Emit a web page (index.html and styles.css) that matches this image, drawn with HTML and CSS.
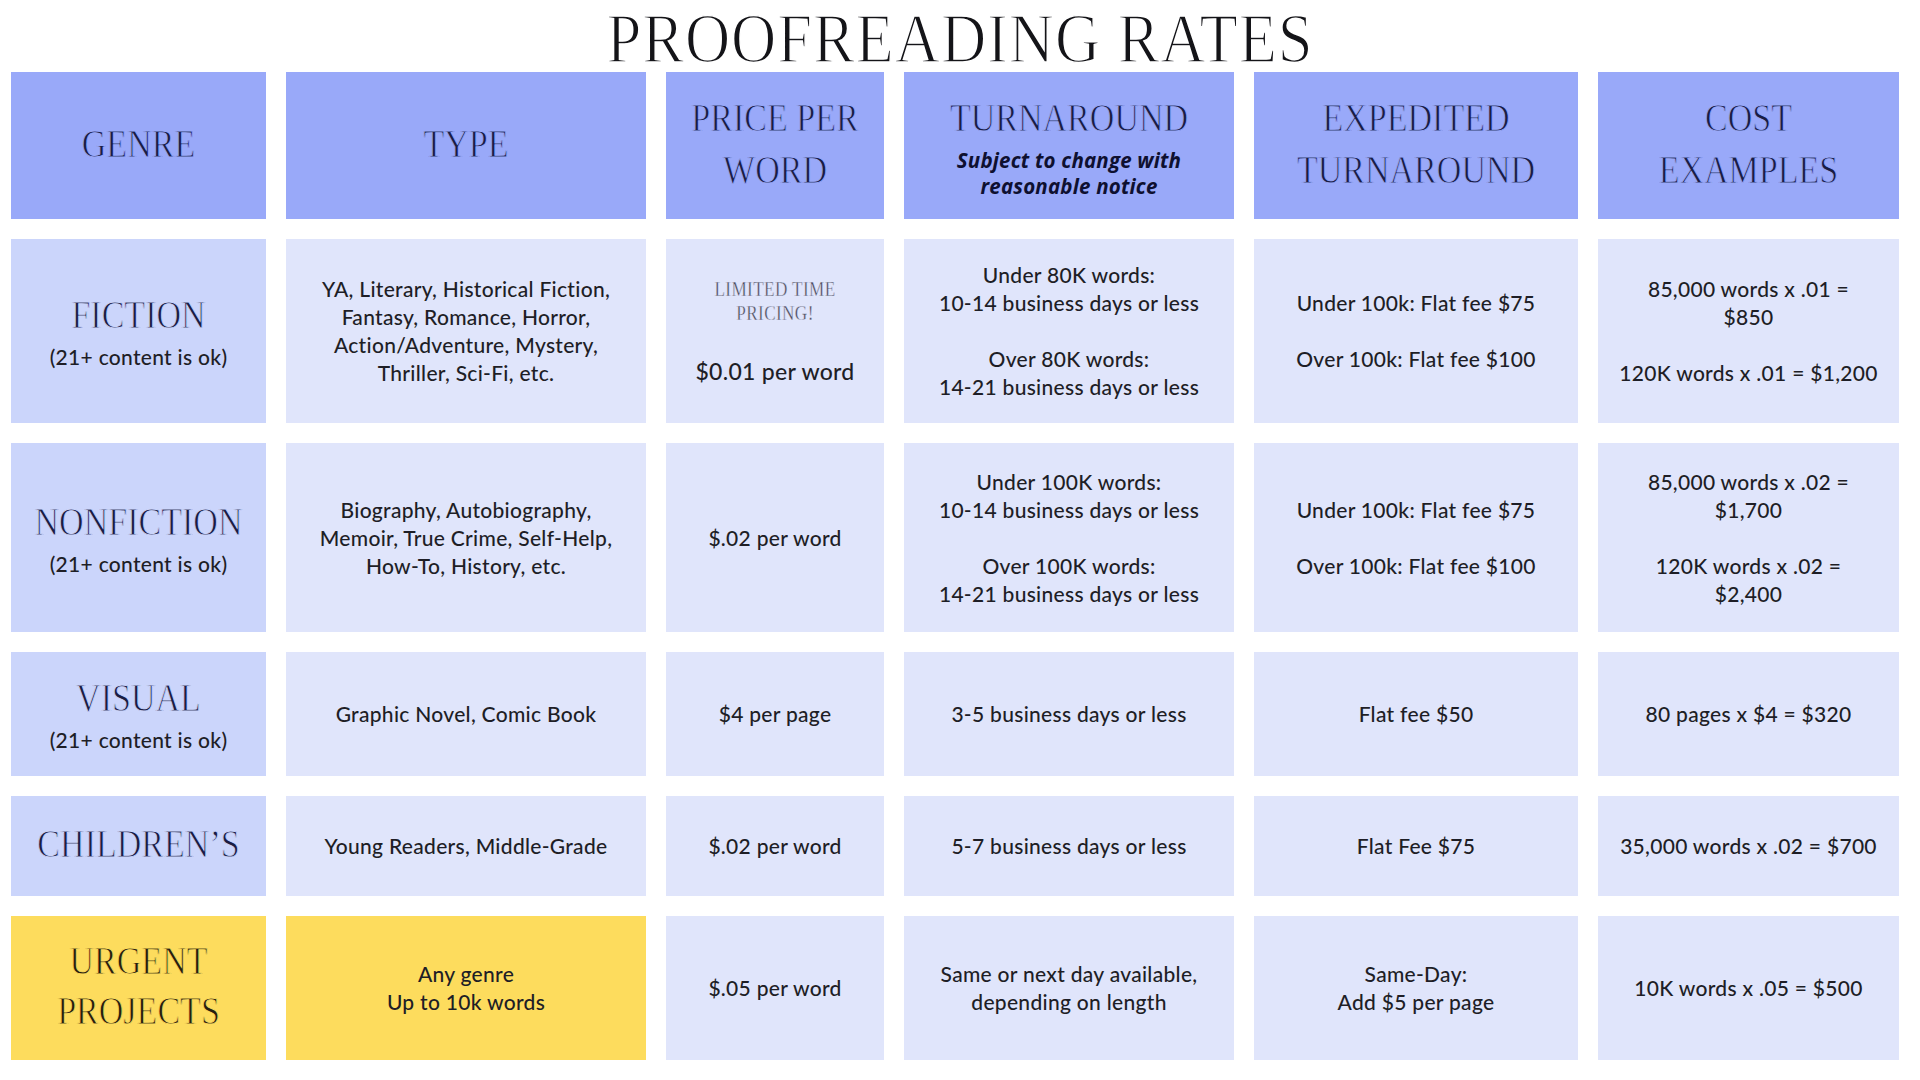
FILE: index.html
```html
<!DOCTYPE html>
<html lang="en">
<head>
<meta charset="utf-8">
<title>Proofreading Rates</title>
<link rel="stylesheet" href="styles.css">
</head>
<body>
<h1 class="title"><span class="title-text">PROOFREADING RATES</span></h1>
<div class="rates">
  <div class="cell head"><div class="serif">GENRE</div></div>
  <div class="cell head"><div class="serif">TYPE</div></div>
  <div class="cell head"><div class="serif">PRICE PER<br>WORD</div></div>
  <div class="cell head"><div class="serif tall">TURNAROUND</div><p class="note">Subject to change with<br>reasonable notice</p></div>
  <div class="cell head"><div class="serif">EXPEDITED<br>TURNAROUND</div></div>
  <div class="cell head"><div class="serif">COST<br>EXAMPLES</div></div>

  <div class="cell genre"><div class="serif">FICTION</div><p class="txt">(21+ content is ok)</p></div>
  <div class="cell"><p class="txt">YA, Literary, Historical Fiction,<br>Fantasy, Romance, Horror,<br>Action/Adventure, Mystery,<br>Thriller, Sci-Fi, etc.</p></div>
  <div class="cell"><div class="promo">LIMITED TIME<br>PRICING!</div><p class="txt big">$0.01 per word</p></div>
  <div class="cell"><p class="txt">Under 80K words:<br>10-14 business days or less<br><br>Over 80K words:<br>14-21 business days or less</p></div>
  <div class="cell"><p class="txt">Under 100k: Flat fee $75<br><br>Over 100k: Flat fee $100</p></div>
  <div class="cell"><p class="txt">85,000 words x .01 =<br>$850<br><br>120K words x .01 = $1,200</p></div>

  <div class="cell genre"><div class="serif">NONFICTION</div><p class="txt">(21+ content is ok)</p></div>
  <div class="cell"><p class="txt">Biography, Autobiography,<br>Memoir, True Crime, Self-Help,<br>How-To, History, etc.</p></div>
  <div class="cell"><p class="txt">$.02 per word</p></div>
  <div class="cell"><p class="txt">Under 100K words:<br>10-14 business days or less<br><br>Over 100K words:<br>14-21 business days or less</p></div>
  <div class="cell"><p class="txt">Under 100k: Flat fee $75<br><br>Over 100k: Flat fee $100</p></div>
  <div class="cell"><p class="txt">85,000 words x .02 =<br>$1,700<br><br>120K words x .02 =<br>$2,400</p></div>

  <div class="cell genre"><div class="serif">VISUAL</div><p class="txt">(21+ content is ok)</p></div>
  <div class="cell"><p class="txt">Graphic Novel, Comic Book</p></div>
  <div class="cell"><p class="txt">$4 per page</p></div>
  <div class="cell"><p class="txt">3-5 business days or less</p></div>
  <div class="cell"><p class="txt">Flat fee $50</p></div>
  <div class="cell"><p class="txt">80 pages x $4 = $320</p></div>

  <div class="cell genre"><div class="serif">CHILDREN’S</div></div>
  <div class="cell"><p class="txt">Young Readers, Middle-Grade</p></div>
  <div class="cell"><p class="txt">$.02 per word</p></div>
  <div class="cell"><p class="txt">5-7 business days or less</p></div>
  <div class="cell"><p class="txt">Flat Fee $75</p></div>
  <div class="cell"><p class="txt">35,000 words x .02 = $700</p></div>

  <div class="cell urgent"><div class="serif">URGENT<br>PROJECTS</div></div>
  <div class="cell urgent"><p class="txt">Any genre<br>Up to 10k words</p></div>
  <div class="cell"><p class="txt">$.05 per word</p></div>
  <div class="cell"><p class="txt">Same or next day available,<br>depending on length</p></div>
  <div class="cell"><p class="txt">Same-Day:<br>Add $5 per page</p></div>
  <div class="cell"><p class="txt">10K words x .05 = $500</p></div>
</div>
</body>
</html>
```

FILE: styles.css
```css
html, body {
  margin: 0;
  padding: 0;
  background: #ffffff;
}

body {
  width: 1920px;
  height: 1080px;
  overflow: hidden;
  font-family: "Lato", "Open Sans", sans-serif;
  color: #1e1e26;
}

.title {
  margin: 0;
  height: 72px;
  text-align: center;
  font-family: "Liberation Serif", serif;
  font-weight: 400;
  font-size: 70px;
  line-height: 78px;
  color: #141418;
}

.title-text {
  display: inline-block;
  transform: scaleX(0.895);
  letter-spacing: 1px;
  -webkit-text-stroke: 1.6px #ffffff;
}

.rates {
  display: grid;
  grid-template-columns: 255px 360px 218px 330px 324px 301px;
  grid-template-rows: 147px 184px 189px 124px 100px 144px;
  gap: 20px;
  margin-left: 11px;
}

.cell {
  --bg: #e0e5fb;
  display: flex;
  flex-direction: column;
  justify-content: center;
  align-items: stretch;
  text-align: center;
  background: var(--bg);
  overflow: hidden;
}

.head {
  --bg: #99a9f9;
}

.genre {
  --bg: #cbd5fb;
}

.urgent {
  --bg: #fddc5d;
}

.serif {
  font-family: "Liberation Serif", serif;
  font-weight: 400;
  font-size: 41px;
  line-height: 52px;
  color: #1a1d42;
  transform: translateY(-3px) scaleX(0.83);
  -webkit-text-stroke: 0.9px var(--bg);
  white-space: nowrap;
}

.serif.tall {
  line-height: 54px;
}

.urgent .serif {
  color: #241f10;
  line-height: 50px;
}

.txt {
  margin: 0;
  font-size: 21px;
  font-weight: 500;
  line-height: 28px;
  letter-spacing: 0.3px;
  color: #1e1e26;
}

.txt.big {
  font-size: 23px;
  line-height: 30px;
}

.note {
  margin: 0;
  font-family: "Open Sans", "Lato", sans-serif;
  font-weight: 700;
  font-style: italic;
  font-size: 20.5px;
  line-height: 26px;
  letter-spacing: 0.2px;
  color: #0e1030;
}

.promo {
  font-family: "Liberation Serif", serif;
  font-size: 22px;
  line-height: 24px;
  letter-spacing: 0.5px;
  color: #4a4a5c;
  transform: scaleX(0.78);
  -webkit-text-stroke: 0.4px var(--bg);
  margin-bottom: 31px;
  white-space: nowrap;
}
```
